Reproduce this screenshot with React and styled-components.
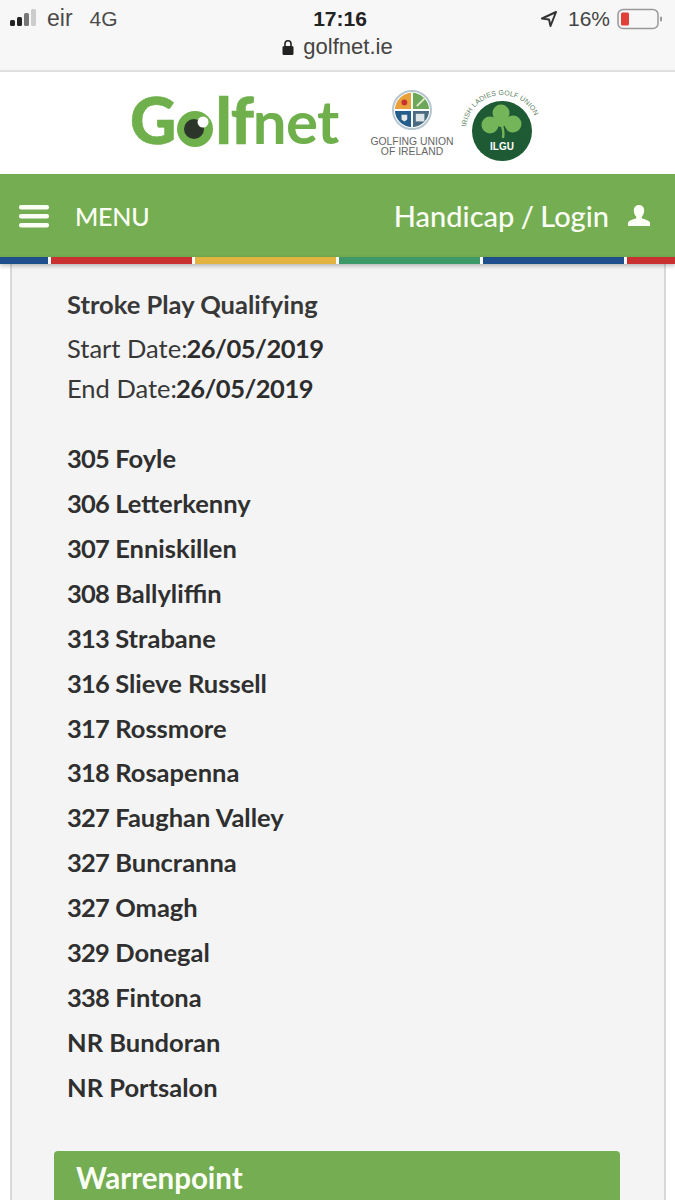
import * as React from "react";
import styled, { createGlobalStyle } from "styled-components";

const GREEN = "#74ad52";
const COURSES = [
  ["305", "Foyle"],
  ["306", "Letterkenny"],
  ["307", "Enniskillen"],
  ["308", "Ballyliffin"],
  ["313", "Strabane"],
  ["316", "Slieve Russell"],
  ["317", "Rossmore"],
  ["318", "Rosapenna"],
  ["327", "Faughan Valley"],
  ["327", "Buncranna"],
  ["327", "Omagh"],
  ["329", "Donegal"],
  ["338", "Fintona"],
  ["NR", "Bundoran"],
  ["NR", "Portsalon"],
];
const STRIPES = [
  { color: "#1f4e8c", width: 48 },
  { color: "#c8312f", width: 141 },
  { color: "#e3b341", width: 141 },
  { color: "#3d9a68", width: 141 },
  { color: "#1f4e8c", width: 141 },
  { color: "#c8312f", width: 48 },
];

const GlobalStyle = createGlobalStyle`
  html, body {
    margin: 0;
    padding: 0;
    background: #fff;
  }
  body {
    font-family: Lato, "Liberation Sans", sans-serif;
  }
`;

const Page = styled.div`
  width: 675px;
  height: 1200px;
  overflow: hidden;
  display: flex;
  flex-direction: column;
`;

const PhoneBar = styled.div`
  height: 72px;
  flex: none;
  box-sizing: border-box;
  background: #f7f7f7;
  border-bottom: 2px solid #e0e0e0;
  padding: 5px 12px 0 10px;
  font-family: "Liberation Sans", Arial, sans-serif;
  color: #333;
`;

const StatusRow = styled.div`
  display: grid;
  grid-template-columns: 1fr auto 1fr;
  align-items: center;
  height: 27px;
`;

const StatusLeft = styled.div`
  display: flex;
  align-items: center;
  gap: 7px;
  font-size: 21px;
  color: #4a4a4a;
`;

const Carrier = styled.span`
  font-size: 23px;
  margin-right: 10px;
`;

const Clock = styled.div`
  font-size: 21px;
  font-weight: 700;
  color: #222;
  margin-left: 7px;
`;

const StatusRight = styled.div`
  display: flex;
  align-items: center;
  justify-content: flex-end;
  gap: 7px;
  font-size: 21px;
  color: #444;
`;

const ArrowWrap = styled.span`
  display: flex;
  margin-right: 3px;
`;

const UrlRow = styled.div`
  display: flex;
  justify-content: center;
  align-items: center;
  gap: 9px;
  margin-top: 2px;
  padding-left: 2px;
  font-size: 22px;
  color: #444;
`;

const LogoBar = styled.div`
  height: 102px;
  flex: none;
  background: #fff;
  display: flex;
  align-items: flex-start;
  padding: 0 0 0 130px;
  box-sizing: border-box;
`;

const Wordmark = styled.div`
  display: flex;
  align-items: baseline;
  color: #6fb04d;
  font-size: 64px;
  line-height: 1;
  width: 240px;
  flex: none;
  margin-top: 16px;
  -webkit-text-stroke: 0.6px #6fb04d;
`;

const WordBold = styled.span`
  font-weight: 900;
  letter-spacing: -1px;
`;

const WordLight = styled.span`
  font-weight: 700;
  font-size: 60px;
  letter-spacing: -0.7px;
  -webkit-text-stroke: 0;
`;

const BallWrap = styled.span`
  align-self: flex-end;
  display: flex;
  margin: 0 2px 5px 2px;
`;

const GuiBadge = styled.div`
  display: flex;
  flex-direction: column;
  align-items: center;
  width: 84px;
  flex: none;
  margin-top: 18px;
  margin-right: 7px;
`;

const GuiText = styled.div`
  font-size: 10.4px;
  line-height: 9.5px;
  text-align: center;
  color: #666;
  font-family: "Liberation Sans", Arial, sans-serif;
  margin-top: 7px;
  white-space: nowrap;
`;

const IlguWrap = styled.div`
  flex: none;
  margin-top: 14px;
`;

const NavBar = styled.div`
  height: 83px;
  flex: none;
  background: ${GREEN};
  display: flex;
  align-items: center;
  justify-content: space-between;
  padding: 0 24px 0 18px;
  color: #fcfff6;
`;

const NavGroup = styled.div`
  display: flex;
  align-items: center;
  gap: ${(p) => p.$gap}px;
`;

const MenuLabel = styled.span`
  font-size: 25px;
  font-weight: 500;
  letter-spacing: -0.2px;
`;

const LoginLabel = styled.span`
  font-size: 29px;
  font-weight: 500;
  word-spacing: -1px;
`;

const StripeBar = styled.div`
  height: 7px;
  flex: none;
  display: flex;
  gap: 3px;
  background: #fff;
  box-shadow: 0 2px 4px rgba(0, 0, 0, 0.25);
  position: relative;
  z-index: 1;
`;

const Stripe = styled.div`
  flex: none;
  width: ${(p) => p.$width}px;
  background: ${(p) => p.$color};
`;

const Content = styled.div`
  flex: 1;
  margin: 0 9px 0 10px;
  background: #f4f4f4;
  border-left: 2px solid #d8d8d8;
  border-right: 2px solid #d8d8d8;
  padding: 19px 44px 0 42px;
  color: #383838;
  min-height: 0;
`;

const Info = styled.div`
  padding-left: 13px;
  font-size: 25.5px;
`;

const Line = styled.div`
  line-height: 42px;
  height: ${(p) => p.$height}px;
  font-weight: ${(p) => (p.$bold ? 700 : 400)};
  white-space: nowrap;
`;

const Strong = styled.b`
  font-weight: 700;
  color: #2d2d2d;
  letter-spacing: -0.5px;
  margin-left: -1px;
`;

const CourseList = styled.div`
  margin-top: 27px;
`;

const Course = styled.div`
  font-weight: 700;
  line-height: 44.93px;
  height: 44.93px;
  color: #2f2f2f;
  white-space: nowrap;
`;

const CourseCode = styled.span`
  letter-spacing: ${(p) => (p.$numeric ? "-0.8px" : "0")};
`;

const SectionHead = styled.div`
  margin-top: 41px;
  background: ${GREEN};
  border-radius: 4px 4px 0 0;
  color: #fcfff6;
  font-size: 29.5px;
  font-weight: 700;
  padding: 9px 22px;
  height: 60px;
  box-sizing: border-box;
`;

const Signal = () => (
  <svg width="30" height="20" viewBox="0 0 30 20">
    <rect x="0" y="11" width="5" height="6" rx="1.5" fill="#222" />
    <rect x="7" y="8" width="5" height="9" rx="1.5" fill="#222" />
    <rect x="14" y="4" width="5" height="13" rx="1.5" fill="#777" />
    <rect x="21" y="0" width="5" height="17" rx="1.5" fill="#ccc" />
  </svg>
);

const LocationArrow = () => (
  <svg width="18" height="18" viewBox="0 0 18 18" fill="none">
    <path d="M16 2 L2 8.5 L9 9.5 L10.5 16 Z" stroke="#333" strokeWidth="2" strokeLinejoin="round" />
  </svg>
);

const Battery = () => (
  <svg width="46" height="22" viewBox="0 0 46 22">
    <rect x="1" y="1.5" width="40" height="19" rx="5" fill="none" stroke="#999" strokeWidth="1.5" />
    <rect x="4" y="4.5" width="8" height="13" rx="1.5" fill="#e0403a" />
    <rect x="43" y="8.5" width="2" height="5" rx="1" fill="#999" />
  </svg>
);

const Lock = () => (
  <svg width="12" height="17" viewBox="0 0 12 17">
    <path d="M3 7V4.8a3 3 0 0 1 6 0V7" fill="none" stroke="#222" strokeWidth="1.6" />
    <rect x="0.5" y="7" width="11" height="9" rx="1.5" fill="#222" />
  </svg>
);

const GolfBall = () => (
  <svg width="36" height="36" viewBox="0 0 36 36">
    <circle cx="18" cy="18" r="18" fill="#6fb04d" />
    <circle cx="17" cy="18" r="10" fill="#2b352a" />
    <circle cx="26" cy="11" r="5.5" fill="#fff" />
  </svg>
);

const GuiCrest = () => (
  <svg width="40" height="40" viewBox="0 0 42 42">
    <circle cx="21" cy="21" r="20" fill="#fff" stroke="#b6c6cf" strokeWidth="2" />
    <path d="M21 3a18 18 0 0 0-18 18h18z" fill="#e9a13c" />
    <path d="M21 3a18 18 0 0 1 18 18H21z" fill="#6da85a" />
    <path d="M3 21a18 18 0 0 0 18 18V21z" fill="#245c8a" />
    <path d="M39 21a18 18 0 0 1-18 18V21z" fill="#4b6c80" />
    <path d="M21 3v36M3 21h36" stroke="#fff" strokeWidth="2" />
    <circle cx="13" cy="13" r="3" fill="#c8312f" />
    <path d="M26 17l8-8" stroke="#dfe9c8" strokeWidth="2" />
    <path d="M10 26h6v5l-3 2-3-2z" fill="#e8e8e8" />
    <path d="M25 25h9v8h-9z" fill="#dfe6ea" />
  </svg>
);

const IlguBadge = () => (
  <svg width="82" height="76" viewBox="0 0 82 76">
    <defs>
      <path id="ilgu-arc" d="M5 45a36 36 0 1 1 72 0" />
    </defs>
    <text fontSize="7" fill="#5d7f63" fontFamily="Liberation Sans, sans-serif" letterSpacing="0.1">
      <textPath href="#ilgu-arc" startOffset="4">IRISH LADIES GOLF UNION</textPath>
    </text>
    <circle cx="41" cy="45" r="30" fill="#1e5a34" />
    <g fill="#74b55a">
      <circle cx="40" cy="27" r="8.5" />
      <circle cx="29" cy="39" r="8.5" />
      <circle cx="52" cy="38" r="8.5" />
      <circle cx="40" cy="35" r="6" />
    </g>
    <path d="M40 37c2 6 3 9 2 15" fill="none" stroke="#74b55a" strokeWidth="2.4" />
    <text x="41" y="64" fontSize="10" fontWeight="700" fill="#fff" textAnchor="middle" fontFamily="Liberation Sans, sans-serif">ILGU</text>
  </svg>
);

const Burger = () => (
  <svg width="32" height="24" viewBox="0 0 32 24">
    <rect x="1" y="1" width="30" height="4.5" rx="2" fill="#fcfff6" />
    <rect x="1" y="10" width="30" height="4.5" rx="2" fill="#fcfff6" />
    <rect x="1" y="19" width="30" height="4.5" rx="2" fill="#fcfff6" />
  </svg>
);

const UserIcon = () => (
  <svg width="24" height="22" viewBox="0 0 24 22">
    <path d="M12 0c3.4 0 5.2 2.6 5.2 5.6 0 2.6-1 4.8-2.4 6v1.6c2.6 1 7.2 2 8.2 4.2V21H1v-3.6c1-2.2 5.6-3.2 8.2-4.2v-1.6c-1.4-1.2-2.4-3.4-2.4-6C6.8 2.6 8.6 0 12 0z" fill="#fcfff6" />
  </svg>
);

export default function App() {
  return (
    <Page>
      <GlobalStyle />
      <PhoneBar>
        <StatusRow>
          <StatusLeft>
            <Signal />
            <Carrier>eir</Carrier>
            <span>4G</span>
          </StatusLeft>
          <Clock>17:16</Clock>
          <StatusRight>
            <ArrowWrap>
              <LocationArrow />
            </ArrowWrap>
            <span>16%</span>
            <Battery />
          </StatusRight>
        </StatusRow>
        <UrlRow>
          <Lock />
          golfnet.ie
        </UrlRow>
      </PhoneBar>
      <LogoBar>
        <Wordmark>
          <WordBold>G</WordBold>
          <BallWrap>
            <GolfBall />
          </BallWrap>
          <WordBold>lf</WordBold>
          <WordLight>net</WordLight>
        </Wordmark>
        <GuiBadge>
          <GuiCrest />
          <GuiText>
            GOLFING UNION
            <br />
            OF IRELAND
          </GuiText>
        </GuiBadge>
        <IlguWrap>
          <IlguBadge />
        </IlguWrap>
      </LogoBar>
      <NavBar>
        <NavGroup $gap={25}>
          <Burger />
          <MenuLabel>MENU</MenuLabel>
        </NavGroup>
        <NavGroup $gap={18}>
          <LoginLabel>Handicap / Login</LoginLabel>
          <UserIcon />
        </NavGroup>
      </NavBar>
      <StripeBar>
        {STRIPES.map((s, i) => (
          <Stripe key={i} $color={s.color} $width={s.width} />
        ))}
      </StripeBar>
      <Content>
        <Info>
          <Line $bold $height={44}>Stroke Play Qualifying</Line>
          <Line $height={40}>
            Start Date:<Strong>26/05/2019</Strong>
          </Line>
          <Line $height={42}>
            End Date:<Strong>26/05/2019</Strong>
          </Line>
          <CourseList>
            {COURSES.map(([code, name]) => (
              <Course key={name}>
                <CourseCode $numeric={code !== "NR"}>{code}</CourseCode> {name}
              </Course>
            ))}
          </CourseList>
        </Info>
        <SectionHead>Warrenpoint</SectionHead>
      </Content>
    </Page>
  );
}
